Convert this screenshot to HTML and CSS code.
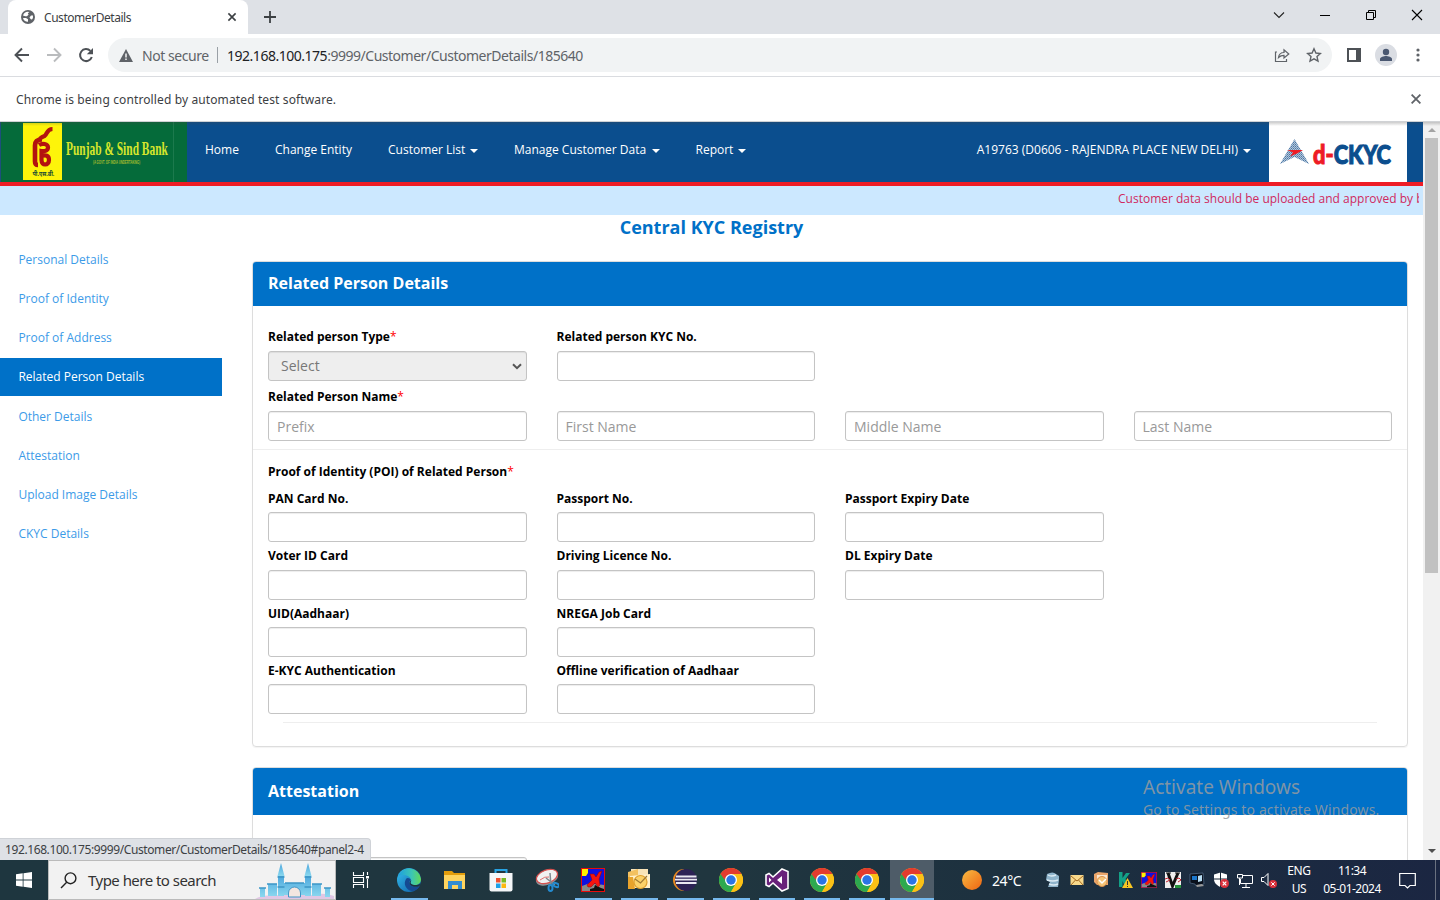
FILE: index.html
```html
<!DOCTYPE html>
<html lang="en">
<head>
<meta charset="utf-8">
<title>CustomerDetails</title>
<link rel="stylesheet" href="styles.css">
</head>
<body>
<svg class="defs" width="0" height="0">
  <defs>
    <linearGradient id="edgeA" x1="0" y1="0" x2="1" y2="1"><stop offset="0" stop-color="#35c1ef"/><stop offset="1" stop-color="#0c59a4"/></linearGradient>
    <linearGradient id="edgeB" x1="0" y1="0" x2="1" y2="0"><stop offset="0" stop-color="#1e9fe0"/><stop offset=".6" stop-color="#3cc6b4"/><stop offset="1" stop-color="#62d957"/></linearGradient>
    <linearGradient id="sun" x1="0" y1="0" x2="1" y2="1"><stop offset="0" stop-color="#f8bb42"/><stop offset="1" stop-color="#ee6412"/></linearGradient>
    <linearGradient id="castle" x1="0" y1="0" x2="0" y2="1"><stop offset="0" stop-color="#4aa5dc"/><stop offset="1" stop-color="#8bd8ef"/></linearGradient>
    <pattern id="hatch" width="2" height="2" patternUnits="userSpaceOnUse"><rect width="2" height="2" fill="#b3c6d9"/><rect width="1" height="1" fill="#4a77a6"/><rect x="1" y="1" width="1" height="1" fill="#6d92b8"/></pattern>
    <symbol id="chrome" viewBox="0 0 24 24">
      <circle cx="12" cy="12" r="12" fill="#fbc116"/>
      <path d="M1.600 6A12 12 0 0 0 12 24L17.200 15 12 12Z" fill="#2da94f"/>
      <path d="M12 6h10.400A12 12 0 0 1 12 24l5.200-9Z" fill="#fbc116"/>
      <path d="M1.600 6 6.800 15 12 6Z" fill="#2da94f"/>
      <path d="M1.600 6A12 12 0 0 1 22.400 6H12L8 9 5.500 11.500Z" fill="#e33b2e"/>
      <circle cx="12" cy="12" r="6" fill="#fff"/><circle cx="12" cy="12" r="4.700" fill="#2a74e6"/>
    </symbol>
    <symbol id="xapp" viewBox="0 0 24 24">
      <rect width="24" height="24" fill="#e80b0b"/><rect x="1" y="1" width="22" height="22" fill="#1010e0"/>
      <path d="M1 18 9 15l14 2v6H1Z" fill="#898989"/><path d="M1 1h6v4L5 8H1Z" fill="#fff200"/>
      <path d="m9 21 4-1 1-3 6 3 3 1v2H9Z" fill="#111"/>
      <path d="M9 6h4l2 3 3-5 3-1-3 8 1 6-2 2-3-4-4 4H7l-1-2 5-5Z" fill="#f5140f" stroke="#8b0909" stroke-width=".5"/>
    </symbol>
  </defs>
</svg>

<header class="tabstrip">
  <div class="tab">
    <svg class="globe" width="14" height="14" viewBox="0 0 14 14"><circle cx="7" cy="7" r="7" fill="#5f6368"/><path d="M8.500 2 6.800 3.200 7.600 4.500 6 6.300H4.200L2 5.500A5.500 5.500 0 0 1 8.500 2ZM2 8h3l2 1.200v2.600A5 5 0 0 1 2 8ZM10 5.500h2a5 5 0 0 1-1 4L9.800 9.300 8.500 7.500Z" fill="#fff"/></svg>
    <span class="tab-title">CustomerDetails</span>
    <svg width="10" height="10" viewBox="0 0 10 10"><path d="m1.400 1.400 7.200 7.200M8.600 1.400 1.400 8.600" stroke="#3c4043" stroke-width="1.600"/></svg>
  </div>
  <svg class="plus" width="12" height="12" viewBox="0 0 12 12"><path d="M6 0v12M0 6h12" stroke="#3c4043" stroke-width="1.800"/></svg>
  <div class="win-controls">
    <svg width="12" height="12" viewBox="0 0 12 12"><path d="m1 3.500 5 5 5-5" fill="none" stroke="#222" stroke-width="1.100"/></svg>
    <svg width="12" height="12" viewBox="0 0 12 12"><path d="M1 6.500h10" stroke="#000"/></svg>
    <svg width="12" height="12" viewBox="0 0 12 12"><path d="M1.500 3.500h7v7h-7ZM3.500 3.500v-2h7v7h-2" fill="none" stroke="#000"/></svg>
    <svg width="12" height="12" viewBox="0 0 12 12"><path d="m1 1 10 10M11 1 1 11" stroke="#000" stroke-width="1.100"/></svg>
  </div>
</header>

<div class="toolbar">
  <div class="nav-buttons">
    <svg width="16" height="16" viewBox="0 0 16 16"><path d="M15 8H2M8 1.500 1.500 8 8 14.500" fill="none" stroke="#4d5156" stroke-width="1.900"/></svg>
    <svg width="16" height="16" viewBox="0 0 16 16"><path d="M1 8h13M8 1.500 14.500 8 8 14.500" fill="none" stroke="#babcbe" stroke-width="1.900"/></svg>
    <svg width="16" height="16" viewBox="0 0 16 16"><path d="M13.800 10A6 6 0 1 1 12.400 3.900" fill="none" stroke="#4d5156" stroke-width="2"/><path d="M15 1v6.200H8.800Z" fill="#4d5156"/></svg>
  </div>
  <div class="omnibox">
    <svg width="14" height="13" viewBox="0 0 14 13"><path d="M7 0 14 13H0Z" fill="#5f6368"/><path d="M7 4.500v4M7 9.500v1.600" stroke="#fff" stroke-width="1.400"/></svg>
    <span class="not-secure">Not secure</span>
    <span class="divider"></span>
    <span class="url"><b>192.168.100.175</b>:9999/Customer/CustomerDetails/185640</span>
    <svg class="share" width="16" height="16" viewBox="0 0 16 16"><path d="M3 5H1.500v9.500h11V12M4.500 10.500c.5-3.500 2.500-5 5.500-5V2.800L14.800 7 10 11V8.300c-2.500 0-4 .7-5.500 2.200Z" fill="none" stroke="#5f6368" stroke-width="1.200"/></svg>
    <svg width="16" height="16" viewBox="0 0 16 16"><path d="m8 1.800 1.900 4.200 4.500.5-3.400 3.100 1 4.500L8 11.800l-4 2.300 1-4.500L1.600 6.500 6.100 6Z" fill="none" stroke="#5f6368" stroke-width="1.400"/></svg>
  </div>
  <svg class="side-ic" width="14" height="14" viewBox="0 0 14 14"><path d="M0 0h14v14H0Z" fill="#4d5156"/><path d="M2 2h7v10H2Z" fill="#fff"/></svg>
  <svg class="avatar" width="22" height="22" viewBox="0 0 22 22"><circle cx="11" cy="11" r="11" fill="#dadde3"/><circle cx="11" cy="8" r="3.200" fill="#4a5871"/><path d="M5 17v-2c0-2 4-3 6-3s6 1 6 3v2Z" fill="#4a5871"/></svg>
  <svg class="dots" width="4" height="16" viewBox="0 0 4 16"><g fill="#5f6368"><circle cx="2" cy="3" r="1.600"/><circle cx="2" cy="8" r="1.600"/><circle cx="2" cy="13" r="1.600"/></g></svg>
</div>

<div class="infobar">
  <span>Chrome is being controlled by automated test software.</span>
  <svg width="10" height="10" viewBox="0 0 10 10"><path d="m.6.6 8.800 8.800M9.400.6.6 9.400" stroke="#5f6368" stroke-width="1.800"/></svg>
</div>

<div class="viewport">
  <div class="page">
    <nav class="navbar">
      <svg class="bank" width="187" height="60" viewBox="0 0 187 60">
        <rect width="187" height="60" fill="#056b3a"/><path d="M0 0h1v60H0Z" fill="#1d4f7c"/><path d="M173.500 0v60" stroke="#1c7a4d"/>
        <rect x="23" y="1" width="39" height="57" fill="#fdf40a"/>
        <g fill="none" stroke="#b3130f">
          <path d="M52.500 7c-6 0-5 5-8 7-3 1-5 2-5 5" stroke-width="4.200"/>
          <path d="M42 17.500c-5 0-7 2-7 6v16c0 2 1 3.500 3 3.500" stroke-width="4.600"/>
          <path d="M39 23c3-2 9-1.500 9 2.500 0 3-3 4-6.500 3.500v9c0 6.500 7.500 5.500 7.500 0 0-4.500-3.500-5.500-7-4" stroke-width="4.200"/>
        </g>
        <text class="hindi" transform="translate(32.500 54) scale(.78 1)">पी.एस.बी.</text>
        <text class="bank-name" transform="translate(66 33) scale(.635 1)">Punjab &amp; Sind Bank</text>
        <text class="bank-sub" transform="translate(93 42) scale(.56 1)">(A GOVT. OF INDIA UNDERTAKING)</text>
      </svg>
      <a class="n1">Home</a><a class="n2">Change Entity</a><a class="n3">Customer List<i></i></a><a class="n4">Manage Customer Data <i></i></a><a class="n5">Report<i></i></a>
      <a class="user">A19763 (D0606 - RAJENDRA PLACE NEW DELHI)<i></i></a>
      <svg class="ckyc" width="138" height="60" viewBox="0 0 138 60">
        <rect width="138" height="60" fill="#fff"/>
        <path d="M25.500 17 40 42 25.500 35 11 42Z" fill="url(#hatch)"/>
        <path d="m18 28 16 0-6 3.500-7 3 3-4Z" fill="#ee1c25"/>
        <text class="logo-text" x="44" y="41.500" textLength="78" lengthAdjust="spacingAndGlyphs"><tspan fill="#ee1c25" stroke="#ee1c25">d-</tspan><tspan fill="#0b4e8e" stroke="#0b4e8e">CKYC</tspan></text>
      </svg>
    </nav>
    <div class="ticker"><div>Customer data should be uploaded and approved by branch</div></div>
    <h1>Central KYC Registry</h1>
    <div class="layout">
      <aside>
        <a>Personal Details</a><a>Proof of Identity</a><a>Proof of Address</a><a class="active">Related Person Details</a><a>Other Details</a><a>Attestation</a><a>Upload Image Details</a><a>CKYC Details</a>
      </aside>
      <main>
        <section class="panel">
          <h2>Related Person Details</h2>
          <div class="body">
            <div class="grid top">
              <label>Related person Type<em>*</em><span class="field select">Select<svg width="10" height="7" viewBox="0 0 10 7"><path d="m1 1.200 4 4 4-4" fill="none" stroke="#555" stroke-width="2"/></svg></span></label>
              <label>Related person KYC No.<span class="field"></span></label>
            </div>
            <div class="grid names">
              <label>Related Person Name<em>*</em><span class="field">Prefix</span></label>
              <label><span class="field">First Name</span></label>
              <label><span class="field">Middle Name</span></label>
              <label><span class="field">Last Name</span></label>
            </div>
            <hr>
            <h3>Proof of Identity (POI) of Related Person<em>*</em></h3>
            <div class="grid poi">
              <label>PAN Card No.<span class="field"></span></label><label>Passport No.<span class="field"></span></label><label>Passport Expiry Date<span class="field"></span></label>
              <label class="first">Voter ID Card<span class="field"></span></label><label>Driving Licence No.<span class="field"></span></label><label>DL Expiry Date<span class="field"></span></label>
              <label class="first">UID(Aadhaar)<span class="field"></span></label><label>NREGA Job Card<span class="field"></span></label>
              <label class="first">E-KYC Authentication<span class="field"></span></label><label>Offline verification of Aadhaar<span class="field"></span></label>
            </div>
            <hr class="inset">
          </div>
        </section>
        <section class="panel second">
          <h2>Attestation</h2>
          <div class="body"><div class="grid"><label><span class="field"></span></label></div></div>
        </section>
      </main>
    </div>
  </div>
  <div class="scrollbar"><svg width="8" height="4" viewBox="0 0 8 4"><path d="m0 4 4-4 4 4Z" fill="#a3a3a3"/></svg><span></span><svg width="8" height="4" viewBox="0 0 8 4"><path d="m0 0 4 4 4-4Z" fill="#505050"/></svg></div>
  <div class="status">192.168.100.175:9999/Customer/CustomerDetails/185640#panel2-4</div>
  <div class="watermark"><p>Activate Windows</p><span>Go to Settings to activate Windows.</span></div>
</div>

<footer class="taskbar">
  <div class="start"><svg width="16" height="16" viewBox="0 0 16 16"><path d="M0 2.300 6.700 1.300V7.600H0ZM7.500 1.200 16 0V7.600H7.500ZM0 8.400H6.700V14.700L0 13.700ZM7.500 8.400H16V16L7.500 14.800Z" fill="#fff"/></svg></div>
  <div class="search">
    <svg width="17" height="17" viewBox="0 0 17 17"><circle cx="10.500" cy="6.300" r="5.400" fill="none" stroke="#222" stroke-width="1.400"/><path d="M6.700 10.200 1 16" stroke="#222" stroke-width="1.400"/></svg>
    <span>Type here to search</span>
    <svg class="castle" width="80" height="37" viewBox="0 0 80 37">
      <path d="M1 37q8-5 19-3 18-6 38-1 12-3 22 1v3Z" fill="#e0c7e4"/>
      <g fill="url(#castle)"><path d="M6 26h5v9H6ZM14 22h9v12h-9ZM24 13h6v21h-6ZM51 13h6v21h-6ZM58 22h9v12h-9ZM71 26h5v9h-5ZM29 21h22v12H29Z"/><path d="m23.500 14 3.500-13 3.500 13ZM50.500 14l3.500-13 3.500 13Z"/></g>
      <path d="M5 26h7M13 22h10M58 22h10M70 26h7M23.500 15h7M50.500 15h7M23.500 25h7M50.500 25h7M31 21h19" stroke="#3d96c6" stroke-width="1.600"/><path d="M34.500 35v-4a6 6 0 0 1 12 0v4Z" fill="#f4e6e0" stroke="#4396c7"/>
    </svg>
  </div>
  <div class="taskview"><svg width="18" height="16" viewBox="0 0 18 16"><path d="M1.500 0v3.500h10V0M1.500 16v-3.500h10V16M1.500 5.500h10v5h-10ZM15.500 0v3M15.500 7v9" fill="none" stroke="#fff" stroke-width="1.100"/><path d="M14 4h3v2.500h-3Z" fill="#fff"/></svg></div>
  <div class="apps">
    <div class="run"><svg width="24" height="24" viewBox="0 0 24 24"><circle cx="12" cy="12" r="12" fill="url(#edgeA)"/><path d="M1 8A12 12 0 0 1 24 11c0 4-3 6-6 6-3 0-5-1-4-3 1-5-5-9-13-6Z" fill="url(#edgeB)"/><path d="M9 11c-3 5 0 11 6 12 3 0 6-2 8-5-3 1.500-8 1.500-10-1.500-1-2-1-3.500 1-4.500-1-2-4-3-5-1Z" fill="#154a92"/><path d="M14.500 12c-1 2-1.500 3 0 4 2 1.500 6 1.500 9-.5l-1 2.500c-3 1.500-8 1-9.500-1.500-1-2-.5-3 1.500-4.500Z" fill="#1e3340"/></svg></div>
    <div><svg width="24" height="20" viewBox="0 0 24 20"><path d="M1 1h8l2 2h11v14H1Z" fill="#e49d0b"/><path d="M1 5h21v14H1Z" fill="#ffd45e"/><path d="M5 11h14v8h-4v-4H9v4H5Z" fill="#338cd0"/></svg></div>
    <div><svg width="24" height="24" viewBox="0 0 24 24"><path d="M6.500 6V2h11v4" fill="none" stroke="#27a3e3" stroke-width="2"/><path d="M.5 5h23v16.500q0 2-2 2h-19q-2 0-2-2Z" fill="#f4f6f8"/><path d="M7 10h4.500v4.500H7Z" fill="#ef5130"/><path d="M12.500 10H17v4.500h-4.500Z" fill="#79ba25"/><path d="M7 15.500h4.500V20H7Z" fill="#1ca1e8"/><path d="M12.500 15.500H17V20h-4.500Z" fill="#fdb710"/></svg></div>
    <div><svg width="24" height="24" viewBox="0 0 24 24"><ellipse cx="12" cy="10" rx="11.500" ry="7" transform="rotate(-20 12 10)" fill="#8c9499"/><ellipse cx="12" cy="8.500" rx="11" ry="6.500" transform="rotate(-20 12 8.500)" fill="#f1f1f1" stroke="#d5504e" stroke-width="1.200"/><path d="M5 12q5-4 9-3" stroke="#e06f6c" fill="none"/><path d="m15 5 1 13M11 10l9 7" stroke="#808990" stroke-width="1.500"/><g fill="none" stroke="#248bd0" stroke-width="2"><ellipse cx="15.500" cy="20" rx="2" ry="3"/><ellipse cx="21" cy="17" rx="3" ry="1.800" transform="rotate(25 21 17)"/></g></svg></div>
    <div class="run"><svg width="24" height="24"><use href="#xapp"/></svg></div>
    <div class="run"><svg width="24" height="24" viewBox="0 0 24 24"><path d="M4 1h17v12H4Z" fill="#f8e4b8"/><path d="M1 4 11 1v18H1Z" fill="#f3c161"/><path d="m3 8 20-2v14H3Z" fill="#fff1cb"/><path d="M1 9h5l2 12H1Z" fill="#e8a32b"/><circle cx="13.500" cy="14" r="6.500" fill="#fbd26a" stroke="#dfa02e" stroke-width="1.200"/><path d="m8 11 5.500 4 6.500-7" fill="none" stroke="#a07a35" stroke-width="1.200"/></svg></div>
    <div class="run"><svg width="24" height="24" viewBox="0 0 24 24"><path d="M11 1A11 11 0 0 0 11 23" fill="#e98b20"/><circle cx="13" cy="12" r="11" fill="#2c2255"/><path d="M3 8.500h20.500M2 11.700h22M3 15h20.500" stroke="#e9e8f1" stroke-width="1.800"/></svg></div>
    <div class="run"><svg width="24" height="24"><use href="#chrome"/></svg></div>
    <div class="run"><svg width="24" height="24" viewBox="0 0 24 24"><path d="M17 1 23 3.500v17L17 23 8 15l-4 3.500L1 17V7l3-1.500L8 9Z" fill="#68217a" stroke="#fff" stroke-width="1.600"/><path d="m17 8-5 4 5 4ZM4 9.500v5L6.500 12Z" fill="#fff"/></svg></div>
    <div class="run"><svg width="24" height="24"><use href="#chrome"/></svg></div>
    <div class="run"><svg width="24" height="24"><use href="#chrome"/></svg></div>
    <div class="run current"><svg width="24" height="24"><use href="#chrome"/></svg></div>
  </div>
  <div class="weather"><svg width="20" height="20" viewBox="0 0 20 20"><circle cx="10" cy="10" r="10" fill="url(#sun)"/></svg><span>24°C</span></div>
  <div class="tray">
    <svg viewBox="0 0 16 16"><path d="M2 2q6-3 9 0l3 2v4l-1 7H3l2-5-4-2Z" fill="#8fb4cb"/><path d="M3 3q3 2 8 0M2 8q6 2 11 0M4 12q5 2 9 0" stroke="#dcebf3" stroke-width="1.500" fill="none"/></svg>
    <svg viewBox="0 0 16 16"><path d="M1.500 3h13v10h-13Z" fill="#f8d98c"/><path d="m2 4 6 5 6-5M2 13l4.500-5M14 13 9.500 8" fill="none" stroke="#a66b21"/></svg>
    <svg viewBox="0 0 16 16"><path d="m1 2 4-2 10 1v12H4l-3-3Z" fill="#e9a56b"/><path d="M4 3h10v8H4Z" fill="#fae7cf"/><circle cx="9" cy="9.500" r="5" fill="#f5c477" stroke="#d9914e"/><path d="m6 8 3 3 4-4" fill="none" stroke="#fff" stroke-width="1.500"/></svg>
    <svg viewBox="0 0 16 16"><path d="M2 0h3.500v6L9 1h4L8.500 7 12 15H8L5.500 9v6H2Z" fill="#13a086"/><path d="m10.500 6 5.500 10H5Z" fill="#f9c623"/><path d="M10.500 9v4M10.500 14v1" stroke="#333"/></svg>
    <svg viewBox="0 0 24 24"><use href="#xapp" width="24" height="24"/></svg>
    <svg viewBox="0 0 16 16"><path d="M0 0h16v16H0Z" fill="#eee"/><path d="m3 1 4.500 13L13 1" fill="none" stroke="#111" stroke-width="3"/><path d="M1 1h5M10 1h5" stroke="#111"/><path d="m0 7 3-1 2 2-4 2M11 7l3-1 2 2-3 2" stroke="#c12331" fill="none"/><path d="M10 13h6v3h-6Z" fill="#24923a"/></svg>
    <svg viewBox="0 0 16 16"><path d="m1 2 13-1 1 11-8 2-1-2-5-1Z" fill="#09101c" stroke="#607b9b" stroke-width=".6"/><path d="M3 4h5v4H3Z" fill="#1b77cc"/><path d="m9 4 4-1v6l-4 1Z" fill="#b9ddf3"/><path d="m7 13 6-1 2 2-7 1Z" fill="#999"/></svg>
    <svg viewBox="0 0 16 16"><path d="M7.500.5 14 2.500v4.500c0 4-3 6.500-6.500 8C4 13.500 1 11 1 7V2.500Z" fill="#fff"/><path d="M7.500 0v15M1 7h13" stroke="#172435"/><circle cx="11.500" cy="11.500" r="4.500" fill="#d9303b"/><path d="m9.700 9.700 3.600 3.600M13.300 9.700l-3.600 3.600" stroke="#fff" stroke-width="1.200"/></svg>
    <svg viewBox="0 0 16 16"><path d="M5 3.500h10.500v8H3.500V7M9 12v3M5 15.500h8M.5 2.500h5V6h-5ZM2.500 6v7" fill="none" stroke="#fff"/></svg>
    <svg viewBox="0 0 16 16"><path d="M.5 5.500H3l4-4v12l-4-4H.5Z" fill="none" stroke="#fff"/><circle cx="12" cy="12" r="4" fill="#d9303b"/><path d="m10.300 10.300 3.400 3.400M13.700 10.300l-3.400 3.400" stroke="#fff"/></svg>
  </div>
  <div class="lang">ENG<br>US</div>
  <div class="clock"><span>11:34</span><span>05-01-2024</span></div>
  <svg class="note" width="17" height="17" viewBox="0 0 17 17"><path d="M.7 1.500h15.600v12H11l-2.500 2.500L6 13.500H.7Z" fill="none" stroke="#fff" stroke-width="1.200"/></svg>
  <span class="peek"></span>
</footer>
</body>
</html>
```

FILE: styles.css
```css
* { box-sizing: border-box; }
body { margin: 0; width: 1440px; height: 900px; overflow: hidden; display: flex; flex-direction: column; background: #fff; font-family: "Open Sans", sans-serif; font-size: 12px; color: #000; }
svg { display: block; flex: none; }
.defs { position: absolute; }

.tabstrip { height: 34px; background: #dee1e6; display: flex; align-items: center; padding-left: 8px; }
.tab { width: 240px; height: 34px; background: #fff; border-radius: 8px 8px 0 0; display: flex; align-items: center; padding: 0 11px 0 13px; color: #3c4043; }
.tab-title { margin-left: 9px; flex: 1; font-family: "Noto Sans", sans-serif; font-size: 12px; letter-spacing: -.45px; }
.plus { margin-left: 16px; }
.win-controls { margin-left: auto; display: flex; gap: 34px; padding: 0 17px 5px 0; }

.toolbar { height: 43px; border-bottom: 1px solid #dadce0; display: flex; align-items: center; padding-left: 14px; }
.nav-buttons { display: flex; gap: 16px; width: 94px; }
.omnibox { width: 1224px; height: 34px; border-radius: 17px; background: #f1f3f4; display: flex; align-items: center; padding: 0 10px 0 11px; font-family: "Noto Sans", sans-serif; font-size: 14px; color: #5f6368; }
.not-secure { margin-left: 9px; width: 75px; letter-spacing: -.45px; white-space: nowrap; }
.divider { width: 1px; height: 16px; background: #9aa0a6; }
.url { margin-left: 9px; flex: 1; letter-spacing: -.48px; }
.url b { font-weight: 400; color: #202124; }
.share { margin-right: 16px; }
.side-ic { margin-left: 15px; }
.avatar { margin-left: 14px; }
.dots { margin-left: 19px; }

.infobar { height: 45px; border-bottom: 1px solid #d0d2d5; display: flex; align-items: center; justify-content: space-between; padding: 0 19px 0 16px; color: #3c4043; font-family: "Noto Sans", sans-serif; font-size: 12px; letter-spacing: .12px; }

.viewport { position: relative; height: 738px; display: flex; overflow: hidden; }
.viewport::before { content: ""; position: absolute; inset: 0 0 auto; height: 4px; background: linear-gradient(rgba(70,70,70,.28), rgba(70,70,70,0)); z-index: 2; }
.page { width: 1423px; height: 738px; overflow: hidden; }
.navbar { height: 64px; background: #0b4e8e; border-bottom: 4px solid #ee1c25; display: flex; align-items: center; color: #fff; font-size: 12px; }
.navbar a { white-space: nowrap; padding-bottom: 5px; }
.navbar i { display: inline-block; border: 4px solid transparent; border-top-color: #fff; border-bottom: 0; margin-left: 5px; vertical-align: 1px; }
.n1 { margin-left: 18px; width: 70px; }
.n2 { width: 113px; }
.n3 { width: 126px; }
.n4 { width: 181.500px; }
.n4 i { margin-left: 3px; }
.user { margin-left: auto; }
.ckyc { margin: 0 16px 0 18px; }
.bank-name { font: 700 18px "Liberation Serif", serif; fill: #d6e52c; }
.bank-sub { font: 700 5px "Liberation Sans", sans-serif; fill: #a9bd2d; }
.hindi { font: 700 7px "Noto Sans", sans-serif; fill: #174a35; }
.logo-text { font: 900 27px Lato, sans-serif; stroke-width: 1.100px; }
.ticker { height: 29px; background: #cce8ff; padding: 4px 4px 0 1118px; font-size: 12px; line-height: 18px; color: #d0295e; }
.ticker div { overflow: hidden; white-space: nowrap; }
h1 { margin: 0; height: 25px; line-height: 25px; text-align: center; color: #0071c8; font-size: 18px; font-weight: 700; }

.layout { display: flex; }
aside { width: 252px; padding-top: 1px; display: flex; flex-direction: column; gap: 1.150px; color: #3c9be8; }
aside a { width: 222px; height: 38px; line-height: 38px; padding-left: 18.400px; font-size: 12px; }
aside .active { background: #0071c8; color: #fff; }
main { width: 1156px; padding-top: 21px; }
.panel { height: 486px; border: 1px solid #ddd; border-radius: 4px; box-shadow: 0 1px 1px rgba(0,0,0,.05); }
.panel h2 { margin: 0; height: 44px; background: #0071c8; border-radius: 3px 3px 0 0; color: #fff; font-size: 16px; font-weight: 700; line-height: 43px; padding-left: 15px; }
.panel.second { margin-top: 20px; height: 200px; }
.panel.second h2 { height: 47px; line-height: 46px; }
.panel.second .body { padding-top: 38px; }
.body { padding-top: 21px; }
.grid { display: grid; grid-template-columns: repeat(4, 288.5px); }
.grid label { display: flex; flex-wrap: wrap; align-content: flex-end; padding: 0 15px; line-height: 20px; font-size: 12px; font-weight: 700; }
.grid .first { grid-column: 1; }
em { color: #f00; font-style: normal; font-weight: 400; }
.field { width: 100%; height: 30px; margin-top: 4px; border: 1px solid #c4c4c4; border-radius: 3px; padding: 0 8px; line-height: 29px; font-size: 14px; font-weight: 400; color: #999; box-shadow: inset 0 1px 1px rgba(0,0,0,.075); }
.select { background: #eee; color: #777; padding: 0 4px 0 12px; display: flex; align-items: center; justify-content: space-between; line-height: 28px; }
.names { margin-top: 6px; }
hr { border: 0; height: 1px; background: #eee; margin: 8px 0 0; }
h3 { margin: 12px 15px 7px; line-height: 20px; font-size: 12px; font-weight: 700; }
.poi { row-gap: 4.330px; }
.poi .field { margin-top: 3.100px; }
.inset { margin: 7.600px 30px 0; }

.scrollbar { width: 17px; background: #f1f1f1; display: flex; flex-direction: column; align-items: center; padding: 6px 0 7px; }
.scrollbar span { width: 13px; height: 435px; background: #c1c1c1; margin: 6px 0 auto; }
.status { position: absolute; left: 0; bottom: 0; width: 371px; height: 22px; background: #dee1e6; border-top-right-radius: 4px; border: 1px solid #cfd2d7; border-width: 1px 1px 0 0; padding-left: 5px; line-height: 21px; color: #3c4043; font-family: "Noto Sans", sans-serif; font-size: 12px; letter-spacing: -.4px; white-space: nowrap; }
.watermark { position: absolute; left: 1143px; top: 652px; color: rgba(150,155,160,.85); font-family: "Noto Sans", sans-serif; font-weight: 400; white-space: nowrap; }
.watermark p { margin: 0; font-size: 19px; line-height: 26px; }
.watermark span { display: block; font-size: 14px; line-height: 20px; letter-spacing: .13px; }

.taskbar { height: 40px; background: linear-gradient(90deg, #1e363f, #20363f 50%, #1c2f3f 75%, #1b2642); display: flex; align-items: center; color: #fff; font-family: "Noto Sans", sans-serif; }
.start { width: 48px; padding-left: 16px; }
.search { width: 288px; height: 40px; background: #f2f2f2; border: 1px solid #bbb; display: flex; align-items: center; padding-left: 11px; color: #333; font-size: 15px; }
.search span { margin-left: 11px; width: 166px; letter-spacing: -.53px; white-space: nowrap; }
.castle { align-self: flex-end; }
.taskview { width: 50px; padding-left: 16px; }
.apps { height: 40px; display: grid; grid-template-columns: repeat(8, 46px) 45px repeat(3, 45px); }
.apps div { display: flex; align-items: center; justify-content: center; border-bottom: 2px solid transparent; margin: 0 4.500px; padding-top: 1px; }
.apps .run { border-color: #76b9ed; }
.apps .current { background: #4e5c68; margin: 0 0 0 1px; }
.weather { display: flex; align-items: center; gap: 10px; margin-left: 28px; width: 83px; font-size: 14px; letter-spacing: -.4px; }
.tray { display: flex; gap: 8px; }
.tray svg { width: 16px; height: 16px; }
.lang { margin-left: 10px; width: 24px; text-align: center; font-size: 12px; line-height: 18px; letter-spacing: -.4px; }
.clock { margin-left: 11px; width: 60px; font-size: 12px; line-height: 18px; display: flex; flex-direction: column; align-items: center; letter-spacing: -.5px; white-space: nowrap; }
.note { margin-left: 17px; }
.peek { margin-left: auto; margin-right: 4px; width: 1px; height: 40px; background: #6a7180; }
```
